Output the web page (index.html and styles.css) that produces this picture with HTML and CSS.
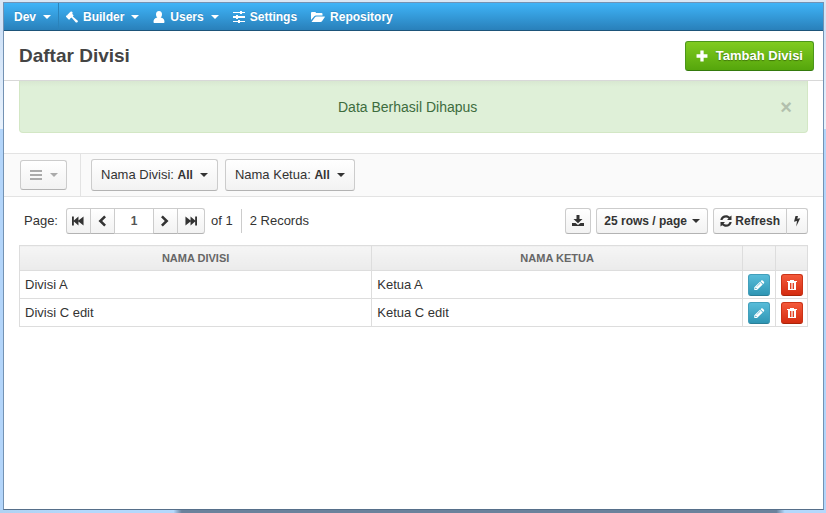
FILE: index.html
```html
<!DOCTYPE html>
<html lang="id">
<head>
<meta charset="utf-8">
<title>Daftar Divisi</title>
<link rel="stylesheet" href="styles.css">
</head>
<body>
<svg class="sprite" aria-hidden="true">
  <symbol id="gavel" viewBox="0 0 14 14"><path d="M6.6.6 7.8 1.8 7.3 3.4 8.9 5 8 6.300 13.700 11.400Q14.200 12.200 13.300 13.100 12.300 13.900 11.500 13.300L6.500 7.600 5.500 8.500 5.200 8.300 4.300 10 3 9.800 0 6.800 0 5.600 1.700 5 1.400 4.600 5.200.8Z"/></symbol>
  <symbol id="user" viewBox="0 0 12 12"><path d="M6 0c2 0 3 1.300 3 3.200 0 1.500-.5 2.700-1.400 3.300C10.300 6.800 11.500 8.600 11.500 11c0 .6-.5 1-1.200 1H1.700C1 12 .5 11.600.5 11c0-2.400 1.200-4.200 3.900-4.500C3.500 5.900 3 4.700 3 3.200 3 1.300 4 0 6 0Z"/></symbol>
  <symbol id="sliders" viewBox="0 0 12 12"><path d="M0 1h7V0h2v1h3v1H9v1H7V2H0zM0 5h3V4h2v1h7v2H5v1H3V7H0zM0 10h5V9h2v1h5v1H7v1H5v-1H0z"/></symbol>
  <symbol id="folder" viewBox="0 0 14 12"><path d="M0 9V2Q0 1 1 1h3q1 0 1 1h5.500q1 0 1 1v1.500H5Q4 4.500 3.300 5.300ZM.5 11 4 6.200Q4.500 5.500 5.500 5.500H13.500q.8 0 .2.800L11 10.300Q10.500 11 9.500 11Z"/></symbol>
  <symbol id="plus" viewBox="0 0 11 11"><path d="M4 .5h3V4h3.500v3H7v3.500H4V7H.5V4H4z"/></symbol>
  <symbol id="bars" viewBox="0 0 12 12"><path d="M0 1h12v2H0zM0 5h12v2H0zM0 9h12v2H0z"/></symbol>
  <symbol id="first" viewBox="0 0 13 12"><path d="M0 1h2v4.500L7 1v4.500L12.500 1v10L7 6.500V11L2 6.500V11H0z"/></symbol>
  <symbol id="prev" viewBox="0 0 12 12"><path d="M8.200.5 10 2.300 6.200 6 10 9.700 8.200 11.500 2.500 6z"/></symbol>
  <symbol id="download" viewBox="0 0 12 12"><path d="M4.500 0h3v4h3L6 8.300 1.500 4h3zM0 8h3.500L6 10l2.500-2H12v3H0z"/></symbol>
  <symbol id="refresh" viewBox="0 0 12 12"><path d="M.3 5C.7 2 3 .3 6 .3c1.500 0 2.800.6 3.800 1.500L11.500.5V5H7l1.500-1.600C7.800 2.700 7 2.400 6 2.400 4.200 2.400 3 3.300 2.500 5ZM11.700 7C11.300 10 9 11.700 6 11.700c-1.500 0-2.800-.6-3.800-1.500L.5 11.500V7H5L3.500 8.600C4.200 9.300 5 9.600 6 9.600 7.800 9.600 9 8.700 9.500 7Z"/></symbol>
  <symbol id="bolt" viewBox="0 0 8 12"><path d="M2.500 1H5L4.300 3.800 7.200 3.200 3.200 11.500 4 6 1 6.700z"/></symbol>
  <symbol id="pencil" viewBox="0 0 12 12"><path fill-rule="evenodd" d="M1.300 8.300 7 2.800 9.700 5.500 4 11H1.300ZM2.300 8.900V10H3.400L3.800 9.600 2.700 8.500ZM3.500 7.500 7 4.100 7.300 4.400 3.800 7.800ZM7.600 2.200 8.200 1.600Q9 1 9.700 1.600L10.900 2.800Q11.500 3.500 10.900 4.200L10.300 4.900Z"/></symbol>
  <symbol id="trash" viewBox="0 0 12 12"><path fill-rule="evenodd" d="M4 2V1h4v1h3v1h-1v8H2V3H1V2ZM4 4v6h1V4ZM5.600 4v6h.8V4ZM7 4v6h1V4Z"/></symbol>
</svg>
<div class="window">
  <nav class="nav">
    <a class="nav-brand" href="#">Dev <i class="caret"></i></a>
    <a href="#"><svg class="icon"><use href="#gavel"/></svg>Builder <i class="caret"></i></a>
    <a href="#"><svg class="icon"><use href="#user"/></svg>Users <i class="caret"></i></a>
    <a href="#"><svg class="icon"><use href="#sliders"/></svg>Settings</a>
    <a href="#"><svg class="icon icon-wide"><use href="#folder"/></svg>Repository</a>
  </nav>
  <header class="header">
    <h1>Daftar Divisi</h1>
    <button class="btn btn-add" type="button"><svg class="icon"><use href="#plus"/></svg>Tambah Divisi</button>
  </header>
  <main>
    <div class="alert" role="status">
      <span>Data Berhasil Dihapus</span>
      <button class="alert-close" type="button" aria-label="Tutup">×</button>
    </div>
    <div class="filters">
      <div class="filters-menu">
        <button class="btn btn-menu" type="button" aria-label="Menu"><svg class="icon icon-wide"><use href="#bars"/></svg><i class="caret"></i></button>
      </div>
      <button class="btn btn-filter" type="button"><span>Nama Divisi: <b>All</b></span><i class="caret"></i></button>
      <button class="btn btn-filter" type="button"><span>Nama Ketua: <b>All</b></span><i class="caret"></i></button>
    </div>
    <div class="pager">
      <label for="page">Page:</label>
      <div class="group group-pages">
        <button class="btn" type="button" aria-label="First"><svg class="icon"><use href="#first"/></svg></button>
        <button class="btn" type="button" aria-label="Previous"><svg class="icon"><use href="#prev"/></svg></button>
        <input id="page" class="page-input" type="text" value="1">
        <button class="btn flip" type="button" aria-label="Next"><svg class="icon"><use href="#prev"/></svg></button>
        <button class="btn flip" type="button" aria-label="Last"><svg class="icon"><use href="#first"/></svg></button>
      </div>
      <span class="page-total">of 1</span>
      <span class="records">2 Records</span>
      <div class="tools">
        <button class="btn" type="button" aria-label="Download"><svg class="icon"><use href="#download"/></svg></button>
        <div class="select">
          <select class="btn" aria-label="Rows per page"><option>25 rows / page</option></select>
          <i class="caret"></i>
        </div>
        <div class="group">
          <button class="btn btn-refresh" type="button"><svg class="icon"><use href="#refresh"/></svg>Refresh</button>
          <button class="btn btn-bolt" type="button" aria-label="Auto refresh"><svg class="icon icon-thin"><use href="#bolt"/></svg></button>
        </div>
      </div>
    </div>
    <table>
      <colgroup><col class="col-name"><col><col class="col-edit"><col class="col-delete"></colgroup>
      <thead>
        <tr><th>NAMA DIVISI</th><th>NAMA KETUA</th><th></th><th></th></tr>
      </thead>
      <tbody>
        <tr>
          <td>Divisi A</td><td>Ketua A</td>
          <td><button class="btn btn-edit" type="button" aria-label="Edit"><svg class="icon"><use href="#pencil"/></svg></button></td>
          <td><button class="btn btn-delete" type="button" aria-label="Hapus"><svg class="icon"><use href="#trash"/></svg></button></td>
        </tr>
        <tr>
          <td>Divisi C edit</td><td>Ketua C edit</td>
          <td><button class="btn btn-edit" type="button" aria-label="Edit"><svg class="icon"><use href="#pencil"/></svg></button></td>
          <td><button class="btn btn-delete" type="button" aria-label="Hapus"><svg class="icon"><use href="#trash"/></svg></button></td>
        </tr>
      </tbody>
    </table>
  </main>
</div>
</body>
</html>
```
FILE: styles.css
```css
* { box-sizing: border-box; }

body {
  margin: 0;
  min-height: 100vh;
  display: flex;
  padding: 2px 2px 3px 3px;
  font: 13px/20px "Liberation Sans", Arial, sans-serif;
  color: #333;
  background:
    linear-gradient(90deg, #b0d2f2, #b4d8fc 10%, #b4d8fc 21%, #6b829c 22%, #6b829c 94%, #b4d8fc 95%) bottom / 100% 3px no-repeat,
    linear-gradient(#dae7f5 3px, #cfe2f8 30px, #e9f2fc 129px, #b3d5fa 129px, #b3d5fa);
}

.sprite { position: absolute; width: 0; height: 0; }

.window {
  flex: 1;
  min-width: 0;
  border: 1px solid #7392b3;
  border-bottom-color: #566f8a;
  background: #fff;
}

.icon { width: 12px; height: 12px; fill: currentColor; flex: none; }
.icon-wide { width: 14px; }
.icon-thin { width: 8px; }

.caret {
  border: 4px solid transparent;
  border-top-color: currentColor;
  border-bottom: 0;
}

/* Navigation */
.nav {
  display: flex;
  height: 28px;
  color: #fff;
  background: linear-gradient(#3fb4f8, #2980ba);
  border-bottom: 1px solid #1d5479;
}

.nav a {
  display: flex;
  align-items: center;
  padding: 0 7px;
  gap: 5px;
  font-size: 12px;
  font-weight: bold;
  color: inherit;
  text-decoration: none;
  text-shadow: 0 -1px 0 rgba(0, 0, 0, .15);
}

.nav .caret { margin-left: 2px; }
.nav a.nav-brand { padding: 0 7px 0 10px; border-right: 1px solid #2b83bb; }

/* Title bar */
.header {
  display: flex;
  align-items: center;
  justify-content: space-between;
  height: 50px;
  padding: 0 9px 0 15px;
  border-bottom: 1px solid #d8d8d8;
}

.header h1 { margin: 0; font-size: 19px; line-height: 24px; color: #444; }

/* Buttons */
.btn {
  display: flex;
  align-items: center;
  justify-content: center;
  height: 26px;
  padding: 0 6px;
  border: 1px solid #ccc;
  border-bottom-color: #b3b3b3;
  border-radius: 3px;
  font: bold 12px/20px "Liberation Sans", Arial, sans-serif;
  color: #333;
  background: linear-gradient(#fff, #f2f2f2);
}

.btn-add {
  height: 30px;
  padding: 0 10px;
  gap: 8px;
  font-size: 13px;
  color: #fff;
  background: linear-gradient(#80cb20, #55a60c);
  border-color: #4c961a #4c961a #347a0c;
  text-shadow: 0 1px 1px rgba(0, 0, 0, .35);
}

/* Notice */
.alert {
  display: flex;
  align-items: center;
  height: 52px;
  margin: 0 15px 20px;
  padding: 0 15px;
  border: 1px solid #d3e7c5;
  border-top: 0;
  border-radius: 0 0 4px 4px;
  font-size: 14px;
  color: #3d6c3e;
  background: linear-gradient(#d8e7d1, #dff0d8 6px);
}

.alert span { flex: 1; text-align: center; }

.alert-close {
  padding: 0;
  border: 0;
  font: bold 20px/20px "Liberation Sans", Arial, sans-serif;
  color: #b2c0ad;
  background: none;
}

/* Filters */
.filters {
  display: flex;
  align-items: center;
  gap: 7px;
  height: 44px;
  padding-left: 16px;
  border: solid #e3e3e3;
  border-width: 1px 0;
  background: #fafafa;
}

.filters-menu {
  display: flex;
  align-items: center;
  align-self: stretch;
  padding-right: 13px;
  margin-right: 3px;
  border-right: 1px solid #e3e3e3;
}

.btn-menu { height: 30px; padding: 0 8px; gap: 7px; color: #aaa; }
.btn-filter { height: 32px; padding: 0 9px; gap: 7px; font-size: 13px; font-weight: normal; }
.btn-filter b { font-size: 12px; }

/* Pager */
.pager { display: flex; align-items: center; height: 48px; padding: 0 15px 0 20px; }
.group { display: flex; }
.pager label { margin-right: 8px; }
.group .btn { border-radius: 0; }
.group-pages .btn { width: 25px; padding: 0; }
.group-pages .btn:last-child { width: 28px; }
.group > :first-child { border-radius: 3px 0 0 3px; }
.group > :last-child { border-radius: 0 3px 3px 0; }
.group > * + * { margin-left: -1px; }
.flip .icon { transform: scaleX(-1); }

.page-input {
  width: 40px;
  height: 26px;
  padding: 0;
  border: 1px solid #ccc;
  font: bold 12px/20px "Liberation Sans", Arial, sans-serif;
  color: #555;
  text-align: center;
}

.page-total { margin: 0 8px 0 6px; }
.records { padding: 2px 0 2px 8px; border-left: 1px solid #ccc; }
.tools { display: flex; gap: 5px; margin-left: auto; }
.select { position: relative; display: flex; }
.select select { appearance: none; padding: 0 20px 0 7px; }
.select .caret { position: absolute; right: 8px; top: 11px; pointer-events: none; }
.btn-refresh { gap: 3px; }

/* Data table */
table {
  width: calc(100% - 30px);
  margin: 0 15px;
  border-collapse: collapse;
  table-layout: fixed;
}

.col-name { width: 44.7%; }
.col-edit { width: 33px; }
.col-delete { width: 32px; }
th, td { border: 1px solid #ddd; }

th {
  height: 25px;
  padding: 0;
  font-size: 11px;
  color: #666;
  background: linear-gradient(#f5f5f5, #ebebeb);
}

td { height: 28px; padding: 0 5px; }
td .btn { width: 22px; height: 22px; padding: 0; color: #fff; }

.btn-edit { background: linear-gradient(#58bcd9, #2f96b4); border-color: #429fbb #429fbb #2a7f98; }
.btn-delete { background: linear-gradient(#f4593a, #d42c10); border-color: #cb3418 #cb3418 #a92409; }
```
